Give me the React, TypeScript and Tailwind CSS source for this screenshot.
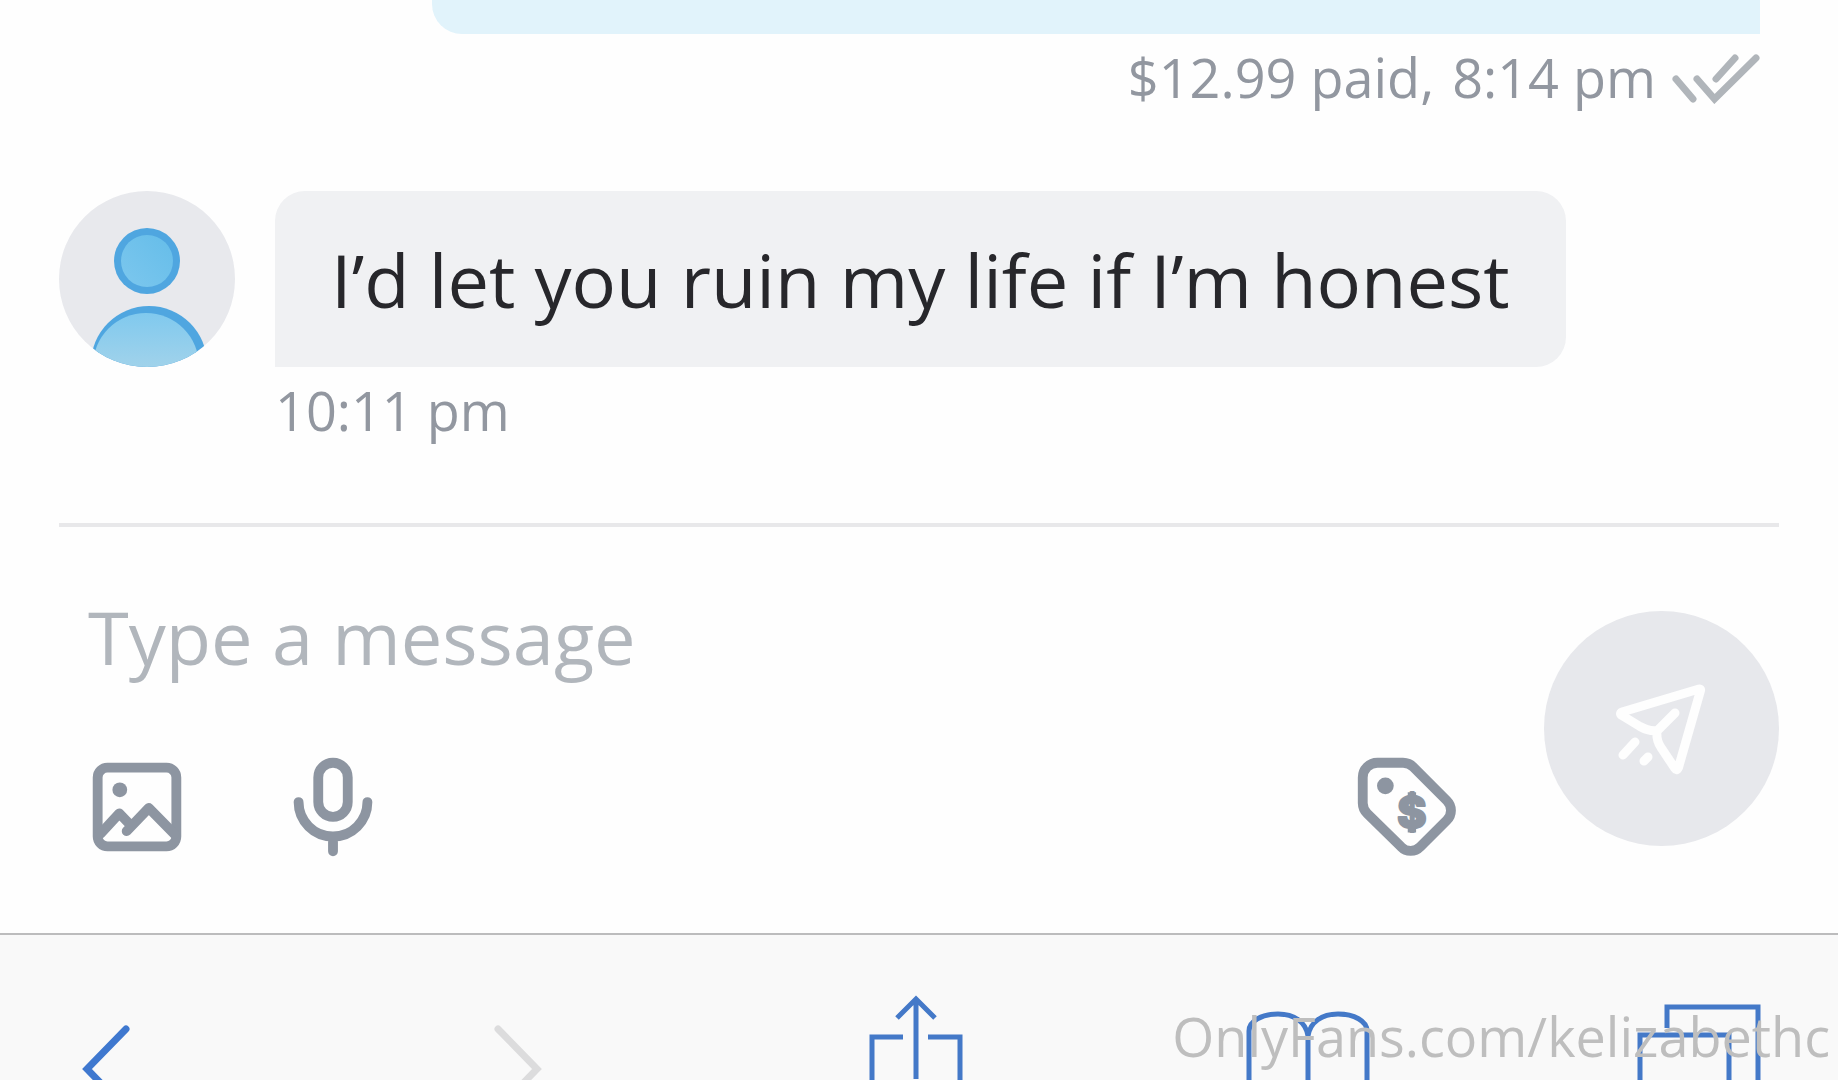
import React, { useState } from 'react';

const Avatar: React.FC = () => (
  <svg viewBox="0 0 176 176" className="size-44 shrink-0" role="img" aria-label="User avatar">
    <defs>
      <clipPath id="avatar-clip">
        <circle cx="88" cy="88" r="88" />
      </clipPath>
      <linearGradient id="head" x1="1" y1="0" x2="0" y2="1">
        <stop offset="0" stopColor="#65bde9" />
        <stop offset="1" stopColor="#7cc7ee" />
      </linearGradient>
      <linearGradient id="body" x1="0" y1="0" x2="0" y2="0.6">
        <stop offset="0" stopColor="#80c9ee" />
        <stop offset="1" stopColor="#a6d4ea" />
      </linearGradient>
    </defs>
    <g clipPath="url(#avatar-clip)">
      <rect width="176" height="176" fill="#e8e9ed" />
      <circle cx="88" cy="70" r="33" fill="#4fa6e0" />
      <circle cx="88" cy="70" r="26" fill="url(#head)" />
      <circle cx="90" cy="173" r="58" fill="#4fa6e0" />
      <circle cx="87" cy="175" r="53" fill="url(#body)" />
    </g>
  </svg>
);

const ReadTicks: React.FC = () => (
  <svg viewBox="0 0 88 50" className="mt-1 h-[50px] w-[88px]" fill="none" stroke="#b0b5ba" strokeWidth="7" strokeLinecap="round" role="img" aria-label="Read">
    <path d="M4 25 21 45M25 25l17.500 20L84 4M44 25 63 4" />
  </svg>
);

const ImageIcon: React.FC = () => (
  <svg viewBox="0 0 24 24" className="size-[118px]" fill="none" stroke="currentColor" strokeWidth="2" strokeLinecap="round" strokeLinejoin="round">
    <rect x="4" y="4" width="16" height="16" rx="2" />
    <circle cx="8.500" cy="8.500" r="1.500" fill="currentColor" stroke="none" />
    <path d="m4.600 17.400 3.800-4.100 2.200 2.300M9.900 16.900l4.500-4.700 5.200 5.300" />
  </svg>
);

const MicIcon: React.FC = () => (
  <svg viewBox="0 0 24 24" className="size-[118px]" fill="none" stroke="currentColor" strokeWidth="2" strokeLinecap="round">
    <rect x="9" y="3" width="6" height="11" rx="3" />
    <path d="M5 11a7 7 0 0 0 14 0M12 18v3" />
  </svg>
);

const PriceIcon: React.FC = () => (
  <svg viewBox="0 0 24 24" className="size-[118px]" fill="none" stroke="currentColor" strokeWidth="2" strokeLinejoin="round">
    <path d="M6 3h5.200a3 3 0 0 1 2.100.9l6.800 6.800a2.800 2.800 0 0 1 0 4l-5.400 5.400a2.700 2.700 0 0 1-3.900 0l-6.900-6.800A3 3 0 0 1 3 11.200V6a3 3 0 0 1 3-3z" />
    <circle cx="7.600" cy="7.700" r="1.700" fill="currentColor" stroke="none" />
    <text
      x="13"
      y="16.200"
      fontSize="9"
      fontWeight="800"
      textAnchor="middle"
      fill="currentColor"
      strokeWidth="0.500"
      className="font-['Inter',sans-serif]"
    >
      $
    </text>
    {/* wider bar ends above and below the sign */}
    <path d="M13 9v1.500M13 15.700v1.500" strokeWidth="1.700" />
  </svg>
);

const SendIcon: React.FC = () => (
  <svg viewBox="0 0 98 98" className="size-[98px]" fill="none" stroke="currentColor" strokeWidth="9" strokeLinecap="round" strokeLinejoin="round">
    <path d="M86 9 9 32q-3 1.500 0 3.500l18 11q9 5 17 4-1 10 4 17l14 21q2 3 3.500-1L87.500 10.500q.5-2-1.500-1.500zM62 33 45 50" />
    <path d="m10 75 12-13M31 81l4-4" />
  </svg>
);

const toolbar = [
  { label: 'Back', color: 'text-[#3f78cf]', width: 7, d: 'M82 95 43 135l39 40' },
  { label: 'Forward', color: 'text-[#dcdcdd]', width: 7, d: 'm58 95 39 40-39 40' },
  { label: 'Share', color: 'text-[#4479c8]', width: 5, d: 'M67 103H36v78h88v-78H92M80 145V64M61 84l19-19 19 19' },
  {
    label: 'Bookmarks',
    color: 'text-[#4479c8]',
    width: 5,
    d: 'M17 180V97c0-10 13-17 29-17s28 8 30 22c2-14 14-22 30-22s29 7 29 17v83M76 102v78',
  },
  { label: 'Tabs', color: 'text-[#4479c8]', width: 5, d: 'M39 94V73h91v107M12 180v-79h89v79' },
];

const App: React.FC = () => {
  const [message, setMessage] = useState('');

  return (
    <div className="relative flex h-screen flex-col overflow-hidden bg-[#fefefe] font-['Open_Sans','Noto_Sans',sans-serif]">
      <main>
        {/* outgoing message, scrolled almost out of view */}
        <section className="flex flex-col items-end pr-[78px] pl-[432px]">
          <div className="h-[34px] w-full rounded-bl-[30px] bg-[#e1f3fb]" />
          <div className="mt-[11px] flex items-center gap-4 text-[54px] leading-[64px] text-[#9297a0]">
            <p className="flex gap-[18px] whitespace-nowrap">
              <span>$12.99 paid,</span>
              <time>8:14 pm</time>
            </p>
            <ReadTicks />
          </div>
        </section>

        <section className="mt-[82px] flex items-start gap-10 px-[59px]">
          <Avatar />
          <div>
            <p className="rounded-[30px] rounded-bl-none bg-[#f0f1f3] px-14 pt-[49px] pb-[47px] text-[74px] leading-[80px] whitespace-nowrap text-[#27272b]">
              I’d let you ruin my life if I’m honest
            </p>
            <time className="mt-[11px] block text-[54px] leading-[64px] text-[#9297a0]">10:11 pm</time>
          </div>
        </section>
      </main>

      <form
        className="mx-[59px] mt-[81px] flex items-end gap-[78px] border-t-4 border-[#e8e8ea] pt-[59px] pb-[67px]"
        onSubmit={(e) => e.preventDefault()}
      >
        <div className="min-w-0 flex-1">
          <input
            type="text"
            aria-label="Type a message"
            placeholder="Type a message"
            value={message}
            onChange={(e) => setMessage(e.target.value)}
            className="block h-[102px] w-full pl-[29px] text-[74px] leading-[102px] text-[#27272b] outline-none placeholder:text-[#b1b6bc]"
          />
          <div className="mt-[60px] flex items-center pl-[19px] text-[#8d95a1]">
            <button type="button" aria-label="Add photo">
              <ImageIcon />
            </button>
            <button type="button" aria-label="Record voice" className="ml-[78px]">
              <MicIcon />
            </button>
            <button type="button" aria-label="Set price" className="ml-auto">
              <PriceIcon />
            </button>
          </div>
        </div>
        <button
          type="submit"
          aria-label="Send"
          className="mb-5 flex size-[235px] shrink-0 items-center justify-center rounded-full bg-[#e7e8ec] text-[#fefefe]"
        >
          <SendIcon />
        </button>
      </form>

      <nav className="flex items-start justify-between border-t-2 border-[#bcbcbd] bg-[#f9f9f9] pr-[70px] pl-11">
        {toolbar.map((item) => (
          <button key={item.label} type="button" aria-label={item.label} className={item.color}>
            <svg
              viewBox="0 1 140 180"
              className="h-[180px] w-[140px]"
              fill="none"
              stroke="currentColor"
              strokeWidth={item.width}
              strokeLinecap={item.width === 7 ? 'round' : 'butt'}
            >
              <path d={item.d} />
            </svg>
          </button>
        ))}
      </nav>

      <p className="pointer-events-none absolute right-2 bottom-3 text-[54px] leading-[64px] text-[#bebebe]">
        OnlyFans.com/kelizabethc
      </p>
    </div>
  );
};

export default App;
